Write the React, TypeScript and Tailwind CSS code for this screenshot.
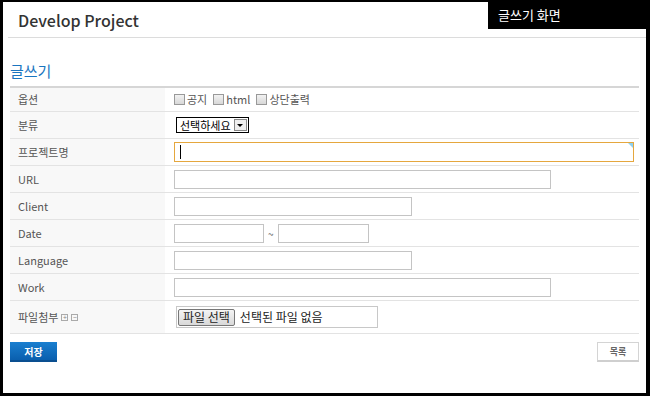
export default function App() {
  const font = { fontFamily: '"Noto Sans CJK KR", "Noto Sans", sans-serif' };
  const label = 'w-[155px] shrink-0 bg-[#f8f8f8] pl-2 flex items-center text-[11px] text-[#555]';
  const row = 'flex border-b border-[#e3e3e3]';
  const cell = 'flex-1 flex items-center pl-[9px]';
  const input = 'h-[19px] border border-[#c4c4c4] bg-white';
  const box = 'w-[11px] h-[11px] border border-[#999] bg-gradient-to-b from-[#f2f2f2] to-[#d8d8d8]';

  return (
    <div className="w-[650px] h-[396px] bg-black pt-[2px] pl-[3px] pr-[4px] pb-[3px]" style={font}>
      <div className="h-full bg-white relative">
        <div className="ml-[5px] h-[36px] border-b border-[#dcdcdc] flex items-center pl-[10px]">
          <span className="text-[16px] font-medium text-[#333]">Develop Project</span>
        </div>
        <div className="absolute right-0 top-[-2px] w-[158px] h-[29px] bg-black text-white text-[13px] pl-[10px] flex items-center">
          글쓰기 화면
        </div>

        <div className="px-[7px]">
          <div className="mt-[23px] text-[15px] text-[#1a75c0] leading-[20px]">글쓰기</div>

          <div className="mt-[5px] border-t-2 border-[#d6d6d6]">
            <div className={`${row} h-[24px]`}>
              <div className={label}>옵션</div>
              <div className={`${cell} gap-[4px] text-[11px] text-[#555]`}>
                <span className="flex items-center gap-[2px]">
                  <span className={box} />
                  공지
                </span>
                <span className="flex items-center gap-[2px] ml-[2px]">
                  <span className={box} />
                  html
                </span>
                <span className="flex items-center gap-[2px] ml-[2px]">
                  <span className={box} />
                  상단출력
                </span>
              </div>
            </div>

            <div className={`${row} h-[27px]`}>
              <div className={label}>분류</div>
              <div className={cell}>
                <div className="ml-[2px] h-[16px] border border-black flex items-center text-[11px] text-black">
                  <span className="px-[3px] leading-none">선택하세요</span>
                  <span className="w-[13px] h-[12px] border border-[#888] bg-[#eee] flex items-center justify-center mr-[1px]">
                    <span className="w-0 h-0 border-l-[3px] border-r-[3px] border-t-[3px] border-l-transparent border-r-transparent border-t-black" />
                  </span>
                </div>
              </div>
            </div>

            <div className={`${row} h-[27px]`}>
              <div className={label}>프로젝트명</div>
              <div className={cell}>
                <div className="relative w-[460px] h-[20px] border border-[#e5a73e] bg-white flex items-center pl-[5px]">
                  <span className="w-px h-[14px] bg-black" />
                  <span className="absolute right-0 top-0 w-0 h-0 border-l-[5px] border-t-[5px] border-l-transparent border-t-[#8ed0f0]" />
                </div>
              </div>
            </div>

            <div className={`${row} h-[27px]`}>
              <div className={label}>URL</div>
              <div className={cell}>
                <div className={`${input} w-[377px]`} />
              </div>
            </div>

            <div className={`${row} h-[27px]`}>
              <div className={label}>Client</div>
              <div className={cell}>
                <div className={`${input} w-[238px]`} />
              </div>
            </div>

            <div className={`${row} h-[27px]`}>
              <div className={label}>Date</div>
              <div className={`${cell} gap-[4px]`}>
                <div className={`${input} w-[90px]`} />
                <span className="text-[10px] text-[#666]">~</span>
                <div className={`${input} w-[91px]`} />
              </div>
            </div>

            <div className={`${row} h-[27px]`}>
              <div className={label}>Language</div>
              <div className={cell}>
                <div className={`${input} w-[238px]`} />
              </div>
            </div>

            <div className={`${row} h-[27px]`}>
              <div className={label}>Work</div>
              <div className={cell}>
                <div className={`${input} w-[377px]`} />
              </div>
            </div>

            <div className={`${row} h-[33px]`}>
              <div className={`${label} gap-[3px]`}>
                파일첨부
                <span className="w-[7px] h-[7px] border border-[#aaa] text-[#888] text-[7px] leading-[5px] flex items-center justify-center">+</span>
                <span className="w-[7px] h-[7px] border border-[#aaa] text-[#888] text-[7px] leading-[5px] flex items-center justify-center">−</span>
              </div>
              <div className={cell}>
                <div className="ml-[2px] w-[202px] h-[22px] border border-[#c8c8c8] flex items-center pl-[1px] gap-[5px] text-[12px] text-[#222]">
                  <span className="h-[17px] px-[4px] border border-[#777] rounded-[2px] bg-gradient-to-b from-[#f4f4f4] to-[#d9d9d9] flex items-center text-[12px] leading-none">
                    파일 선택
                  </span>
                  선택된 파일 없음
                </div>
              </div>
            </div>
          </div>

          <div className="mt-[8px] flex justify-between">
            <button className="w-[47px] h-[20px] bg-gradient-to-b from-[#1a7fd0] to-[#0a5fae] border-b-2 border-[#0a4f90] text-white text-[10px] font-bold">
              저장
            </button>
            <button className="w-[42px] h-[20px] bg-white border border-[#d4d4d4] border-b-2 border-b-[#cfcfcf] text-[#666] text-[9px] font-bold">
              목록
            </button>
          </div>
        </div>
      </div>
    </div>
  );
}
